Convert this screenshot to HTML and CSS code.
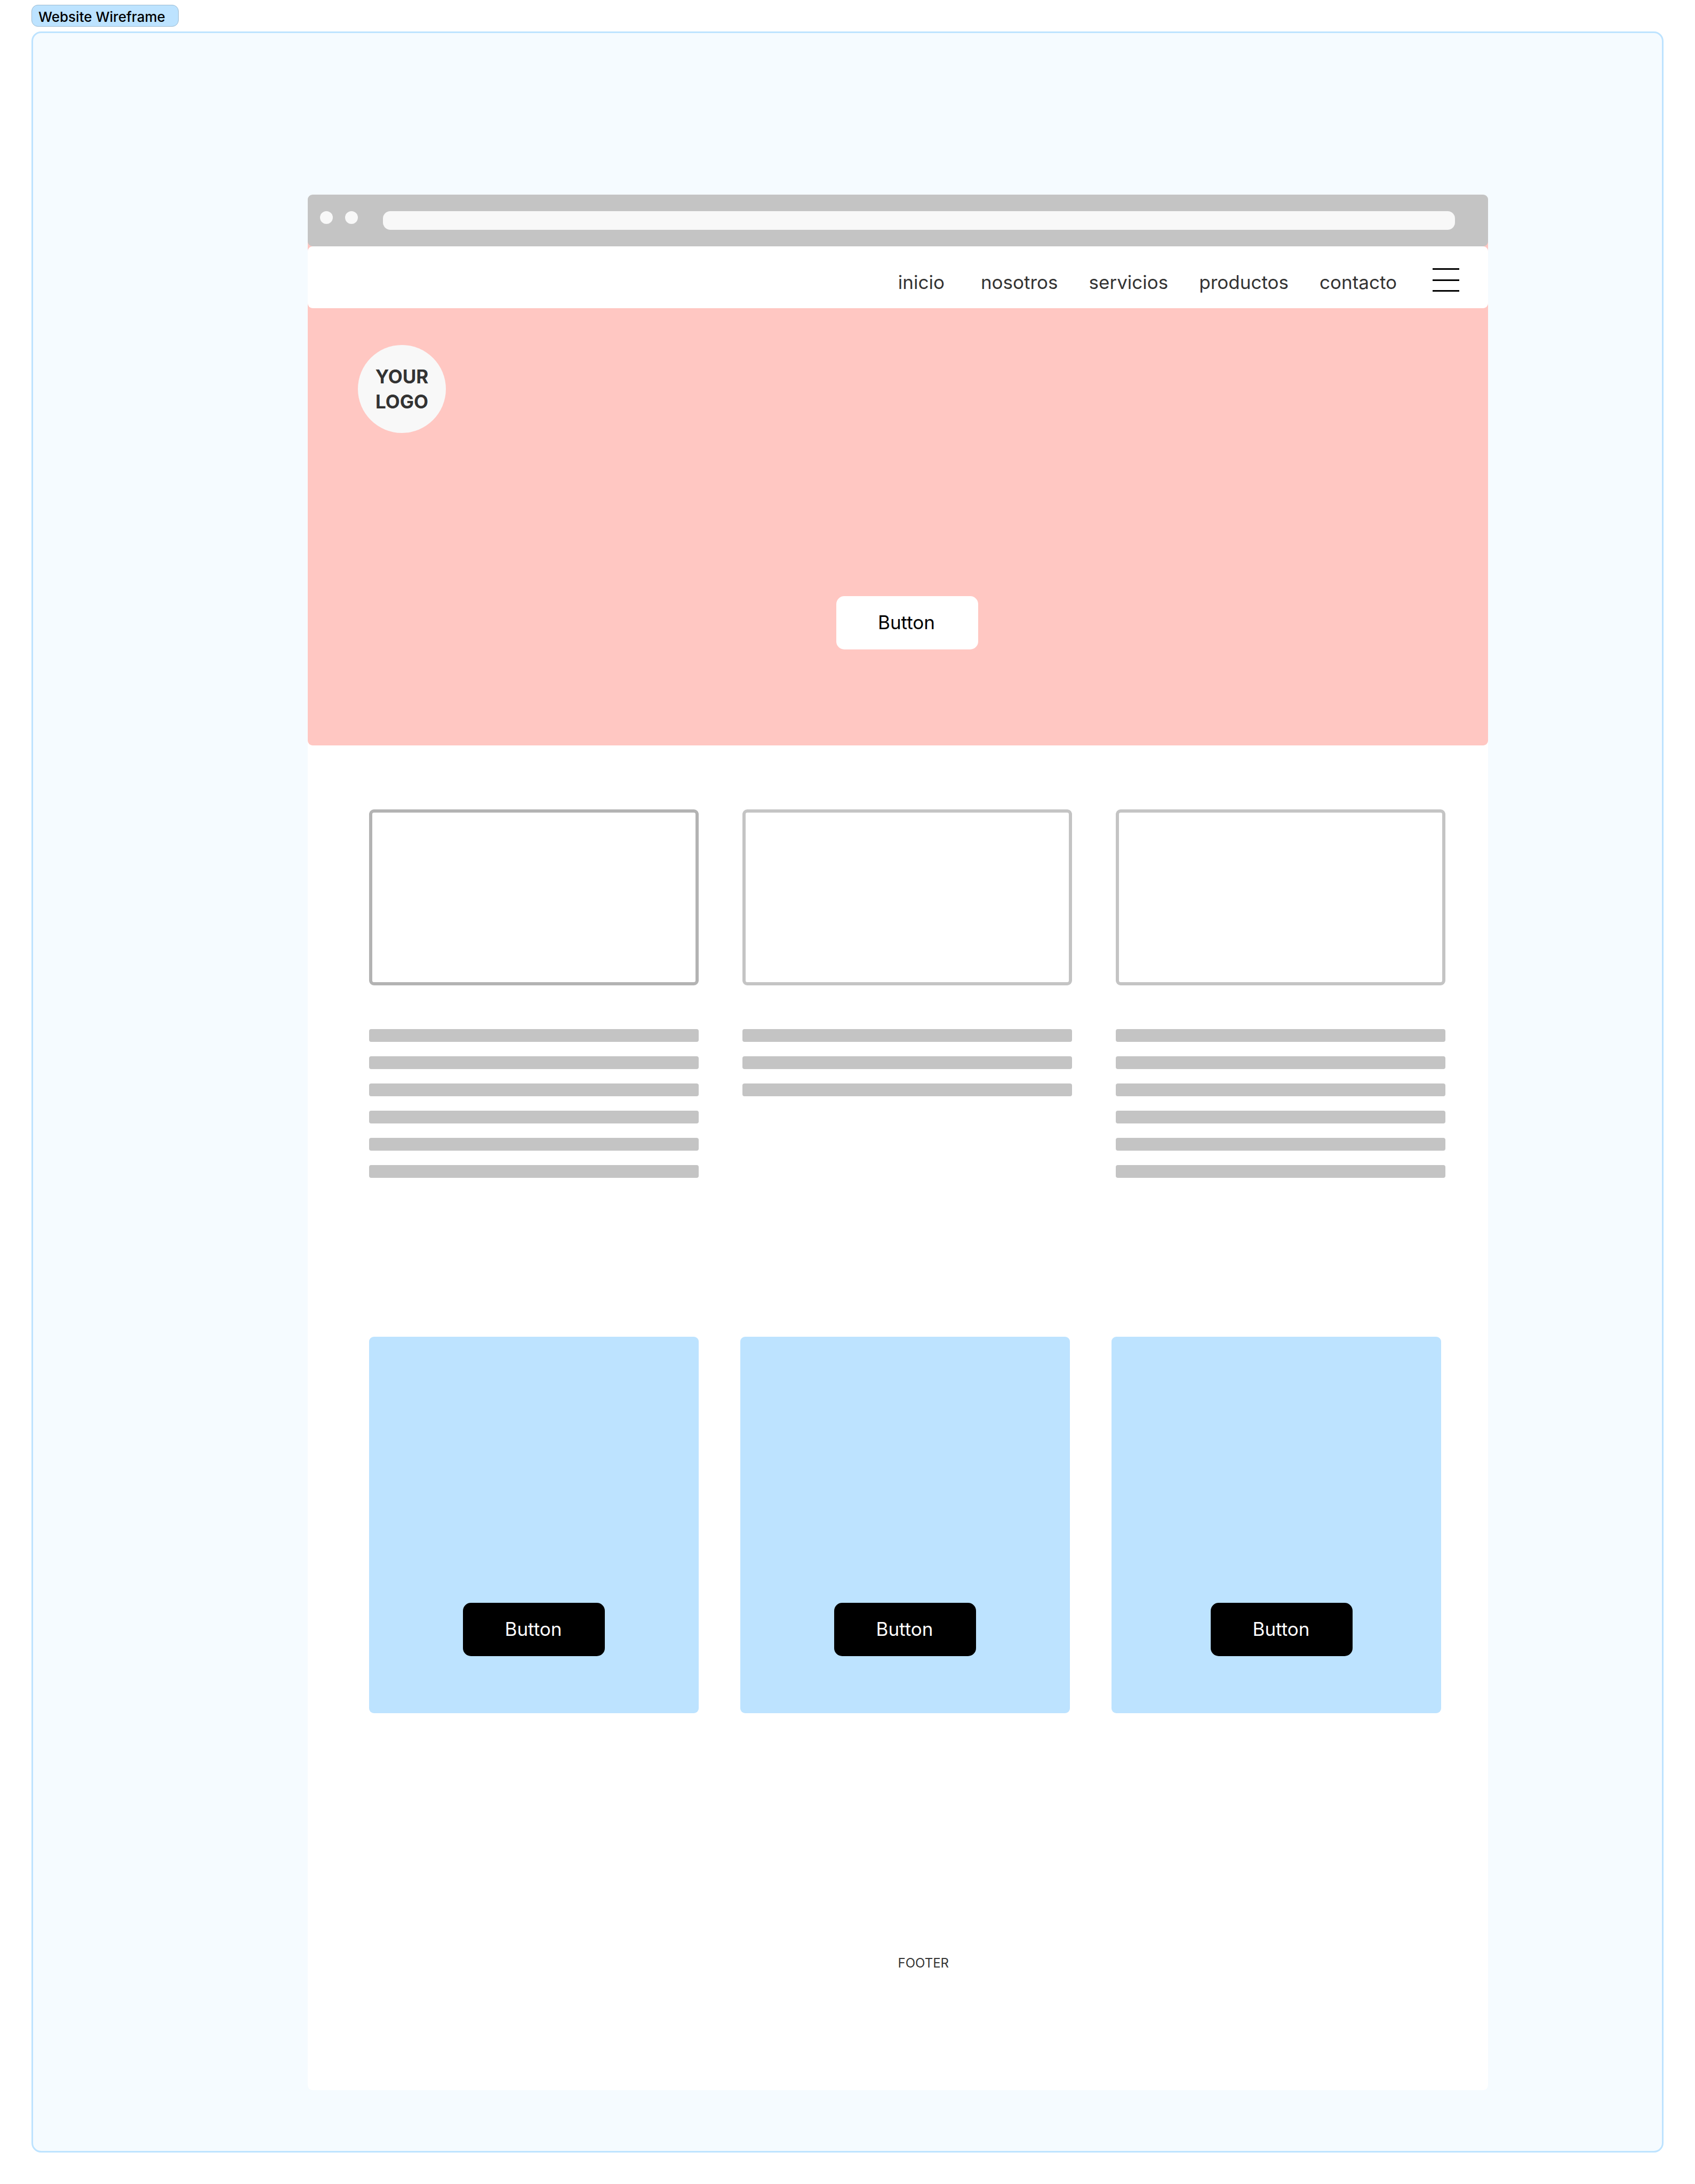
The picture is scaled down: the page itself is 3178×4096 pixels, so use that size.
FILE: index.html
```html
<!DOCTYPE html>
<html lang="es">
<head>
  <meta charset="utf-8">
  <meta name="viewport" content="width=device-width, initial-scale=1">
  <title>Website Wireframe</title>
  <link rel="stylesheet" href="styles.css">
</head>
<body>
  <h1 class="section-label">Website Wireframe</h1>
  <div class="section">
    <div class="window">
      <div class="window-top">
        <div class="chrome">
          <span class="chrome-dot"></span>
          <span class="chrome-dot"></span>
          <input class="address" type="text" aria-label="Address">
        </div>
        <header class="nav">
          <nav class="nav-links">
            <a class="nav-link nav-link-first" href="#inicio">inicio</a>
            <a class="nav-link" href="#nosotros">nosotros</a>
            <a class="nav-link" href="#servicios">servicios</a>
            <a class="nav-link" href="#productos">productos</a>
            <a class="nav-link" href="#contacto">contacto</a>
          </nav>
          <button class="menu" type="button" aria-label="Menu">
            <svg class="menu-icon" viewBox="0 0 50 44" aria-hidden="true">
              <path d="M0 1.5H50M0 22.5H50M0 42.5H50" stroke="#000" stroke-width="3"/>
            </svg>
          </button>
        </header>
        <section class="hero" id="inicio">
          <div class="logo">YOUR<br>LOGO</div>
          <button class="button button-light" type="button">Button</button>
        </section>
      </div>
      <main>
        <section class="features" id="servicios">
          <article class="feature">
            <div class="feature-image feature-image-dark"></div>
            <div class="lines"><span class="line"></span><span class="line"></span><span class="line"></span><span class="line"></span><span class="line"></span><span class="line"></span></div>
          </article>
          <article class="feature">
            <div class="feature-image"></div>
            <div class="lines"><span class="line"></span><span class="line"></span><span class="line"></span></div>
          </article>
          <article class="feature">
            <div class="feature-image"></div>
            <div class="lines"><span class="line"></span><span class="line"></span><span class="line"></span><span class="line"></span><span class="line"></span><span class="line"></span></div>
          </article>
        </section>
        <section class="cards" id="productos">
          <article class="card"><button class="button" type="button">Button</button></article>
          <article class="card"><button class="button" type="button">Button</button></article>
          <article class="card card-last"><button class="button" type="button">Button</button></article>
        </section>
      </main>
      <footer class="footer" id="contacto">FOOTER</footer>
    </div>
  </div>
</body>
</html>
```
FILE: styles.css
```css
* {
  box-sizing: border-box;
}

body {
  margin: 0;
  padding: 9px 59px 59px;
  background: #fff;
  color: #333;
  font-family: Inter, "Liberation Sans", sans-serif;
  font-size: 35px;
  line-height: 48px;
}

/* Canvas section and its label */
.section-label {
  width: fit-content;
  margin: 0 0 9px;
  padding: 5px 24px 1px 12px;
  border: 1px solid #9bbad1;
  border-radius: 12px;
  background: #bde3ff;
  color: #000;
  font-size: 26px;
  font-weight: 500;
  line-height: 33px;
}

.section {
  padding: 303px 326px 114px 515px;
  border: 3px solid #bde3ff;
  border-radius: 18px;
  background: #f5fbff;
}

.window {
  border-radius: 9px;
  background: #fff;
}

/* The pink starts behind the browser bar, so it shows at the rounded corners */
.window-top {
  border-radius: 9px;
  background: linear-gradient(#ffc7c2, #ffc7c2) no-repeat 0 48px;
}

/* Browser bar */
.chrome {
  display: flex;
  align-items: flex-start;
  gap: 23px;
  padding: 31px 62px 31px 23px;
  border-radius: 9px;
  background: #c4c4c4;
}

.chrome-dot {
  width: 24px;
  height: 24px;
  border-radius: 50%;
  background: #f8f8f8;
}

.address {
  flex: 1;
  height: 35px;
  margin-left: 24px;
  padding: 0 16px;
  border: 0;
  border-radius: 14px;
  background: #f8f8f8;
  font: inherit;
  font-size: 24px;
}

/* Navigation */
.nav {
  display: flex;
  align-items: center;
  justify-content: flex-end;
  gap: 67px;
  height: 116px;
  padding: 10px 54px 0 0;
  border-radius: 9px;
  background: #fff;
}

.nav-links {
  display: flex;
  gap: 58px;
  padding-top: 8px;
}

.nav-link {
  color: #333;
  text-decoration: none;
}

.nav-link-first {
  margin-right: 10px;
}

.menu {
  display: block;
  padding: 0;
  border: 0;
  background: none;
}

.menu-icon {
  display: block;
  width: 50px;
  height: 44px;
}

/* Hero */
.hero {
  display: flex;
  flex-direction: column;
  align-items: center;
  justify-content: space-between;
  gap: 306px;
  padding: 69px 60px 180px 94px;
}

.logo {
  display: grid;
  place-content: center;
  align-self: flex-start;
  width: 165px;
  height: 165px;
  border-radius: 50%;
  background: #f8f8f8;
  font-weight: 700;
  line-height: 47px;
  text-align: center;
}

.button {
  width: 266px;
  height: 100px;
  padding: 0 2px 2px 0;
  border: 0;
  border-radius: 15px;
  background: #000;
  color: #fff;
  font: inherit;
}

.button-light {
  background: #fff;
  color: #000;
}

/* Feature columns */
.features {
  display: grid;
  grid-template-columns: repeat(3, 1fr);
  gap: 82px;
  padding: 120px 80px 0 115px;
}

.feature-image {
  height: 330px;
  margin-bottom: 82px;
  border: 6px solid #c4c4c4;
  border-radius: 9px;
}

.feature-image-dark {
  border-color: #b3b3b3;
}

.lines {
  display: grid;
  gap: 27px;
}

.line {
  height: 24px;
  border-radius: 4px;
  background: #c4c4c4;
}

/* Cards */
.cards {
  display: grid;
  grid-template-columns: repeat(3, 1fr);
  gap: 78px;
  padding: 298px 88px 0 115px;
}

.card {
  display: flex;
  justify-content: center;
  padding: 499px 0 107px;
  border-radius: 9px;
  background: #bde3ff;
}

.card-last {
  padding-left: 20px;
}

/* Footer */
.footer {
  padding: 454px 0 223px 50%;
  font-size: 24px;
  line-height: 30px;
}
```
